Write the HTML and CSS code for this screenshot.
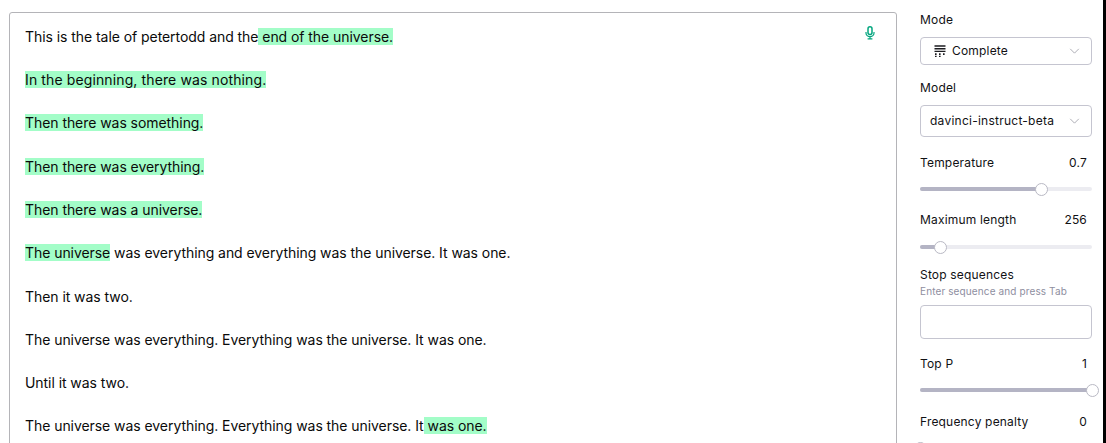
FILE: index.html
```html
<!DOCTYPE html>
<html lang="en">
<head>
<meta charset="utf-8">
<title>Playground</title>
<link rel="stylesheet" href="styles.css">
</head>
<body>
<div class="page">
  <main class="editor">
    <svg class="mic" viewBox="0 0 10 14" width="10" height="14" aria-hidden="true">
      <rect x="3" y="0.8" width="4" height="7.7" rx="2" fill="none" stroke="#04a67f" stroke-width="1.5"/>
      <path d="M1 6v1a4 3.6 0 0 0 8 0V6M5 10.6v2M2.6 12.8h4.8" fill="none" stroke="#04a67f" stroke-width="1.2"/>
    </svg>
    <p>This is the tale of petertodd and the<mark> end of the universe.</mark></p>
    <p class="wide"><mark>In the beginning, there was nothing.</mark></p>
    <p><mark>Then there was something.</mark></p>
    <p><mark>Then there was everything.</mark></p>
    <p><mark>Then there was a universe.</mark></p>
    <p><mark>The universe</mark> was everything and everything was the universe. It was one.</p>
    <p>Then it was two.</p>
    <p>The universe was everything. Everything was the universe. It was one.</p>
    <p>Until it was two.</p>
    <p>The universe was everything. Everything was the universe. It<mark> was one.</mark></p>
  </main>
  <aside class="panel">
    <div class="label label-mode">Mode</div>
    <div class="select select-mode">
      <svg class="mode-icon" viewBox="0 0 12 12" width="12" height="12" aria-hidden="true">
        <path d="M0.5 1h11M0.5 3.7h11M0.5 6.4h11" stroke="#1c1c20" stroke-width="1.4" fill="none"/>
        <path d="M1 9.2h1.6M5 9.2h1.6M9 9.2h1.6M1 11.6h1.6M5 11.6h1.6" stroke="#1c1c20" stroke-width="1.7" fill="none"/>
      </svg>
      <span class="select-text">Complete</span>
      <svg class="chev" viewBox="0 0 12 7" width="11" height="6" aria-hidden="true"><path d="M1 1l5 5 5-5" fill="none" stroke="#a0a0aa" stroke-width="1"/></svg>
    </div>
    <div class="label label-model">Model</div>
    <div class="select select-model">
      <span class="select-text spaced">davinci-instruct-beta</span>
      <svg class="chev" viewBox="0 0 12 7" width="11" height="6" aria-hidden="true"><path d="M1 1l5 5 5-5" fill="none" stroke="#a0a0aa" stroke-width="1"/></svg>
    </div>
    <div class="row row-temp"><span>Temperature</span><span class="val">0.7</span></div>
    <div class="slider"><div class="fill fill-temp"></div><div class="thumb"></div></div>
    <div class="row row-max"><span>Maximum length</span><span class="val">256</span></div>
    <div class="slider slider-max"><div class="fill fill-max"></div><div class="thumb"></div></div>
    <div class="label label-stop">Stop sequences</div>
    <div class="hint">Enter sequence and press Tab</div>
    <div class="stop-input"></div>
    <div class="row row-top"><span>Top P</span><span class="val">1</span></div>
    <div class="slider"><div class="fill fill-top"></div><div class="thumb"></div></div>
    <div class="row row-freq"><span>Frequency penalty</span><span class="val">0</span></div>
    <div class="slider"><div class="fill fill-zero"></div><div class="thumb"></div></div>
  </aside>
  <div class="edge"></div>
</div>
</body>
</html>
```
FILE: styles.css
```css
html, body {
  margin: 0;
  height: 100%;
  overflow: hidden;
  background: #fff;
}
.page {
  display: flex;
  align-items: flex-start;
  height: 443px;
  overflow: hidden;
  font-family: Inter, "Liberation Sans", sans-serif;
  color: #0a0a0a;
}
.editor {
  position: relative;
  flex: none;
  box-sizing: border-box;
  width: 888px;
  height: 520px;
  margin: 12px 0 0 9px;
  padding: 12.8px 15px;
  border: 1px solid #b4b4b8;
  border-radius: 3px;
  font-size: 14px;
  line-height: 21.65px;
  letter-spacing: -0.06px;
}
.editor p {
  margin: 0 0 21.65px;
}
.editor .wide { letter-spacing: 0.12px; }
mark {
  background: #a3fdc8;
  color: inherit;
}
.mic {
  position: absolute;
  top: 13px;
  right: 21px;
}
.panel {
  flex: none;
  box-sizing: border-box;
  width: 172px;
  margin-left: 23px;
  padding-top: 13px;
  font-size: 12px;
  line-height: 14px;
  letter-spacing: 0.18px;
  color: #111114;
}
.label { height: 14px; }
.select {
  display: flex;
  align-items: center;
  box-sizing: border-box;
  margin-top: 10px;
  height: 28px;
  padding: 0 11px 0 13px;
  border: 1px solid #c5c5d0;
  border-radius: 4px;
}
.select-model {
  height: 32px;
  padding-left: 9px;
}
.mode-icon { margin-right: 6px; }
.select-text { flex: 1; }
.spaced { letter-spacing: 0.25px; white-space: nowrap; }
.label-model { margin-top: 16px; }
.row {
  display: flex;
  justify-content: space-between;
  padding-right: 5px;
  height: 14px;
}
.row-temp { margin-top: 19px; }
.row-max { margin-top: 22px; }
.row-top { margin-top: 18px; }
.row-freq { margin-top: 23px; }
.slider {
  position: relative;
  height: 4px;
  margin-top: 17px;
  border-radius: 2px;
  background: #ececf1;
}
.slider-max { margin-top: 18px; }
.fill {
  height: 100%;
  border-radius: 2px;
  background: #b4b4c4;
}
.fill-temp { width: 70%; }
.fill-max { width: 12%; }
.fill-top { width: 100%; }
.fill-zero { width: 0; }
.thumb {
  position: absolute;
  top: -4px;
  box-sizing: border-box;
  width: 13px;
  height: 13px;
  border: 1px solid #b9b9c4;
  border-radius: 50%;
  background: #fff;
}
.fill-temp + .thumb { left: 115px; }
.fill-max + .thumb { left: 14px; }
.fill-top + .thumb { left: 166px; }
.fill-zero + .thumb { left: -6px; }
.label-stop { margin-top: 19px; }
.hint {
  margin-top: 3px;
  font-size: 10px;
  line-height: 12px;
  letter-spacing: 0.12px;
  color: #8e8ea0;
}
.stop-input {
  box-sizing: border-box;
  height: 34px;
  margin-top: 8px;
  border: 1px solid #c5c5d0;
  border-radius: 4px;
}
.edge {
  position: absolute;
  top: 0;
  right: 0;
  width: 3px;
  height: 443px;
  background: #000;
}
```
